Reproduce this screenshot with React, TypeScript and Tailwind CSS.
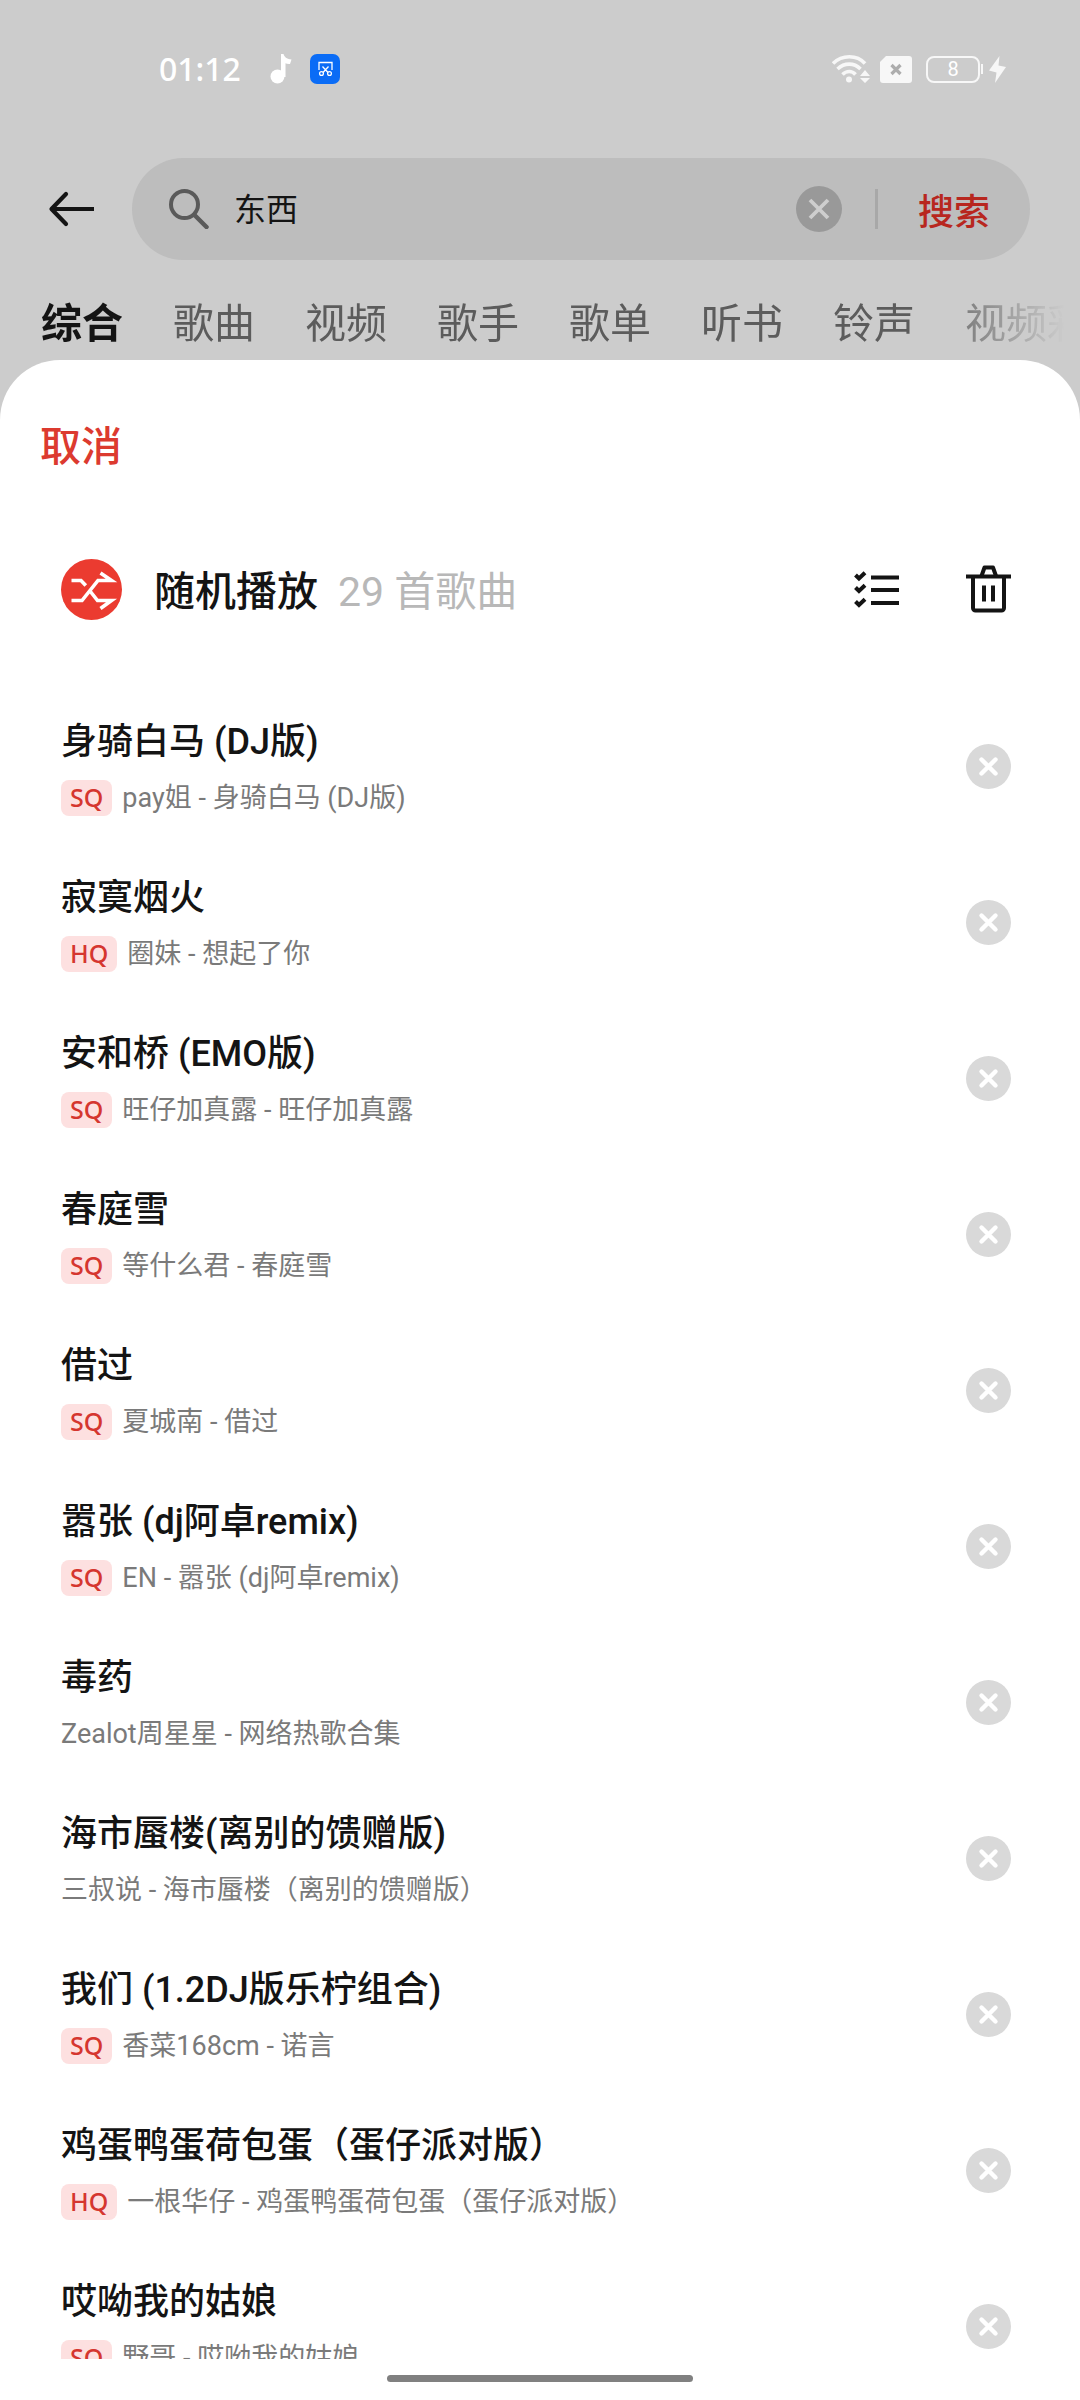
import React, { useState } from "react";

type Song = {
  title: string;
  detail: string;
  quality?: "SQ" | "HQ";
};

const TABS = ["综合", "歌曲", "视频", "歌手", "歌单", "听书", "铃声", "视频彩铃"];

const SONGS: Song[] = [
  { title: "身骑白马 (DJ版)", detail: "pay姐 - 身骑白马 (DJ版)", quality: "SQ" },
  { title: "寂寞烟火", detail: "圈妹 - 想起了你", quality: "HQ" },
  { title: "安和桥 (EMO版)", detail: "旺仔加真露 - 旺仔加真露", quality: "SQ" },
  { title: "春庭雪", detail: "等什么君 - 春庭雪", quality: "SQ" },
  { title: "借过", detail: "夏城南 - 借过", quality: "SQ" },
  { title: "嚣张 (dj阿卓remix)", detail: "EN - 嚣张 (dj阿卓remix)", quality: "SQ" },
  { title: "毒药", detail: "Zealot周星星 - 网络热歌合集" },
  { title: "海市蜃楼(离别的馈赠版)", detail: "三叔说 - 海市蜃楼（离别的馈赠版）" },
  { title: "我们 (1.2DJ版乐柠组合)", detail: "香菜168cm - 诺言", quality: "SQ" },
  { title: "鸡蛋鸭蛋荷包蛋（蛋仔派对版）", detail: "一根华仔 - 鸡蛋鸭蛋荷包蛋（蛋仔派对版）", quality: "HQ" },
  { title: "哎呦我的姑娘", detail: "野哥 - 哎呦我的姑娘", quality: "SQ" },
];

const StatusBar = () => (
  <div className="flex h-[138px] items-center justify-between pr-[74px] pl-[159px] text-white">
    <div className="flex items-center">
      <span className="font-['Noto_Sans',sans-serif] text-[32px] leading-10 font-medium">01:12</span>
      <svg className="ml-[29px] h-[30px] w-[22px]" viewBox="0 0 22 30" fill="currentColor">
        <circle cx="7.5" cy="22.5" r="7" />
        <path d="M11 0h2.5c1 3.500 4 5 8 5.500l-1.500 4.500c-2 .2-3.500-.2-4.500-.800V23H11z" />
      </svg>
      <svg className="ml-[18px] h-[30px] w-[30px]" viewBox="0 0 30 30" fill="none" stroke="#fff" strokeWidth="1.300">
        <rect width="30" height="30" rx="7" fill="#0a6cf6" stroke="none" />
        <path d="M9 16V8.500h13V16M12.500 12.500l5.500 6M18.500 12.500l-5.500 6" />
        <circle cx="11.500" cy="19.500" r="1.900" />
        <circle cx="19.500" cy="19.500" r="1.900" />
      </svg>
    </div>

    <div className="flex items-center">
      <svg className="h-[30px] w-[38px]" viewBox="0 0 38 30" fill="none" stroke="#f7f7f7" strokeWidth="3.600">
        <path d="M1 9.500c9-9 24-9 32 0" />
        <path d="M5.500 15c7-6.500 16.500-6.500 23 0" />
        <path d="M10.500 20.500c4-4 9.500-4 13 0" />
        <circle cx="17" cy="25.500" r="3" fill="#f7f7f7" stroke="none" />
        <path d="M33 16l5 6H28zM33 29l5-5H28z" fill="#f7f7f7" stroke="none" />
      </svg>
      <svg className="ml-2.5 h-[27px] w-8" viewBox="0 0 32 27">
        <path d="M6 0h23a3 3 0 0 1 3 3v21a3 3 0 0 1-3 3H3a3 3 0 0 1-3-3V6z" fill="#f7f7f7" />
        <path d="M11.500 9l9 9M20.500 9l-9 9" stroke="#adadad" strokeWidth="3.200" />
      </svg>
      <div className="ml-3.5 flex h-[27px] w-[54px] items-center justify-center rounded-lg border-2 border-[#f7f7f7] text-xl leading-none">
        8
      </div>
      <div className="ml-px h-2.5 w-0.5 bg-[#f7f7f7]" />
      <svg className="ml-1.5 h-[27px] w-[17px]" viewBox="0 0 17 27" fill="#f7f7f7">
        <path d="M10.500 0L0 14.500l7.500 2L6 27 17 11l-7.500-1.500z" />
      </svg>
    </div>
  </div>
);

const SearchBar = () => {
  const [query, setQuery] = useState("东西");

  return (
    <div className="mt-5 flex items-center pr-[50px] pl-12">
      <button type="button" aria-label="返回" className="shrink-0">
        <svg className="h-9 w-[46px]" viewBox="0 0 46 36" fill="none" stroke="#141414" strokeWidth="4.200" strokeLinecap="round" strokeLinejoin="round">
          <path d="M18 3L3.500 18 18 33" />
          <path d="M4 18h42" strokeLinecap="butt" />
        </svg>
      </button>
      <form
        onSubmit={(e) => e.preventDefault()}
        className="ml-[38px] flex h-[102px] min-w-0 flex-1 items-center rounded-full bg-[#bdbdbd] pr-10 pl-[37px]"
      >
        <svg className="h-10 w-10 shrink-0" viewBox="0 0 40 40" fill="none" stroke="#5a5a5a" strokeWidth="4">
          <circle cx="15.500" cy="15.500" r="13.500" />
          <path d="M25.500 26L37.500 38" strokeWidth="4.500" strokeLinecap="round" />
        </svg>
        <input
          aria-label="搜索内容"
          value={query}
          onChange={(e) => setQuery(e.target.value)}
          className="ml-[25px] min-w-0 flex-1 bg-transparent pt-0.5 text-[32px] leading-10 text-[#141414] outline-none"
        />
        <button type="button" aria-label="清空" onClick={() => setQuery("")} className="shrink-0">
          <svg className="h-[46px] w-[46px]" viewBox="0 0 46 46">
            <circle cx="23" cy="23" r="23" fill="#999" />
            <path d="M14 14l18 18M32 14L14 32" stroke="#cecece" strokeWidth="3.800" />
          </svg>
        </button>
        <div className="ml-[33px] h-10 w-[3px] bg-[#a8a8a8]" />
        <button type="submit" className="ml-10 shrink-0 pt-2 text-4xl leading-10 font-medium text-[#b8271f]">
          搜索
        </button>
      </form>
    </div>
  );
};

const Tabs = () => {
  const [active, setActive] = useState("综合");

  return (
    <nav className="flex h-[100px] items-center gap-[50px] overflow-hidden pt-7 pl-[41px] [mask-image:linear-gradient(to_left,transparent_16px,black_160px)]">
      {TABS.map((tab) => (
        <button
          key={tab}
          type="button"
          onClick={() => setActive(tab)}
          className={
            tab === active
              ? "shrink-0 text-[41px] leading-[50px] font-bold text-[#141414]"
              : "shrink-0 text-[41px] leading-[50px] text-[#5c5c5c]"
          }
        >
          {tab}
        </button>
      ))}
    </nav>
  );
};

const SongRow = ({ song, onRemove }: { song: Song; onRemove: () => void }) => (
  <li className="flex h-[156px] shrink-0 items-center justify-between">
    <div className="min-w-0">
      <p className="truncate text-4xl leading-[52px] font-medium text-[#141414]">{song.title}</p>
      <div className="mt-3 flex h-9 items-center">
        {song.quality && (
          <span className="mr-2.5 flex h-9 items-center rounded-lg bg-[#fde0e0] px-[9px] pb-0.5 font-['Noto_Sans',sans-serif] text-[25px] leading-9 font-medium text-[#d5362f]">
            {song.quality}
          </span>
        )}
        <span className="truncate text-[27px] leading-9 text-[#7a7a7a]">{song.detail}</span>
      </div>
    </div>
    <button type="button" aria-label={`移除 ${song.title}`} onClick={onRemove} className="shrink-0">
      <svg className="h-[45px] w-[45px]" viewBox="0 0 45 45">
        <circle cx="22.500" cy="22.500" r="22.500" fill="#d9d9d9" />
        <path d="M15.500 15.500l14 14M29.500 15.500l-14 14" stroke="#fff" strokeWidth="4.400" strokeLinecap="round" />
      </svg>
    </button>
  </li>
);

export default function App() {
  const [songs, setSongs] = useState(SONGS);

  return (
    <div className="flex h-screen flex-col bg-[#ccc] font-[Roboto,'Noto_Sans_CJK_SC',sans-serif]" lang="zh-CN">
      <header className="shrink-0">
        <StatusBar />
        <SearchBar />
        <Tabs />
      </header>

      <section className="flex min-h-0 flex-1 flex-col rounded-t-[60px] bg-white">
        <div className="flex h-[172px] shrink-0 items-center pt-0.5 pl-10">
          <button type="button" className="text-[41px] leading-[50px] font-medium text-[#dc3a2f]">
            取消
          </button>
        </div>

        <div className="flex h-[114px] shrink-0 items-center justify-between pr-[69px] pl-[61px]">
          <button type="button" className="flex items-center text-[41px] leading-[50px]">
            <svg className="h-[61px] w-[61px]" viewBox="0 0 61 61" fill="none" stroke="#fff" strokeWidth="3.600">
              <circle cx="30.500" cy="30.500" r="30.500" fill="#eb3b30" stroke="none" />
              <path d="M10.500 21.500h9.500l4.800 5" />
              <path d="M10.500 41.500H21l16-20h13.500L39.500 14" />
              <path d="M29 32l7.500 9.500h14L39.500 49.500" />
            </svg>
            <span className="ml-8 pt-1.5 font-medium text-[#141414]">随机播放</span>
            <span className="ml-5 pt-1.5 text-[#b8b8b8]">29 首歌曲</span>
          </button>
          <div className="flex items-center gap-[67px]">
            <button type="button" aria-label="多选">
              <svg className="h-[37px] w-[45px]" viewBox="0 0 45 37" fill="none" stroke="#141414" strokeWidth="4">
                <path d="M17 6.500h28M17 19h28M17 32h28" />
                <path d="M1.500 4l3.500 3.500L11 1.800M1.500 16.500L5 20l6-5.700M1.500 30.500L5 34l6-5.700" />
              </svg>
            </button>
            <button type="button" aria-label="清空列表">
              <svg className="h-12 w-[45px]" viewBox="0 0 45 48" fill="none" stroke="#141414" strokeWidth="4">
                <path d="M0 11.500h45" />
                <path d="M15.500 11l3-8.500h8.500l3 8.500" strokeLinejoin="round" />
                <path d="M7 11.500V43a2.500 2.500 0 0 0 2.500 2.500h26A2.500 2.500 0 0 0 38 43V11.500" />
                <path d="M18 20.500v16M27 20.500v16" />
              </svg>
            </button>
          </div>
        </div>

        <ul className="mt-[42px] flex min-h-0 flex-1 flex-col overflow-hidden pr-[69px] pl-[61px]">
          {songs.map((song) => (
            <SongRow
              key={song.title}
              song={song}
              onRemove={() => setSongs(songs.filter((s) => s !== song))}
            />
          ))}
        </ul>

        <div className="flex h-[41px] shrink-0 justify-center pt-4">
          <div className="h-[7px] w-[306px] rounded-full bg-[#808080]" />
        </div>
      </section>
    </div>
  );
}
